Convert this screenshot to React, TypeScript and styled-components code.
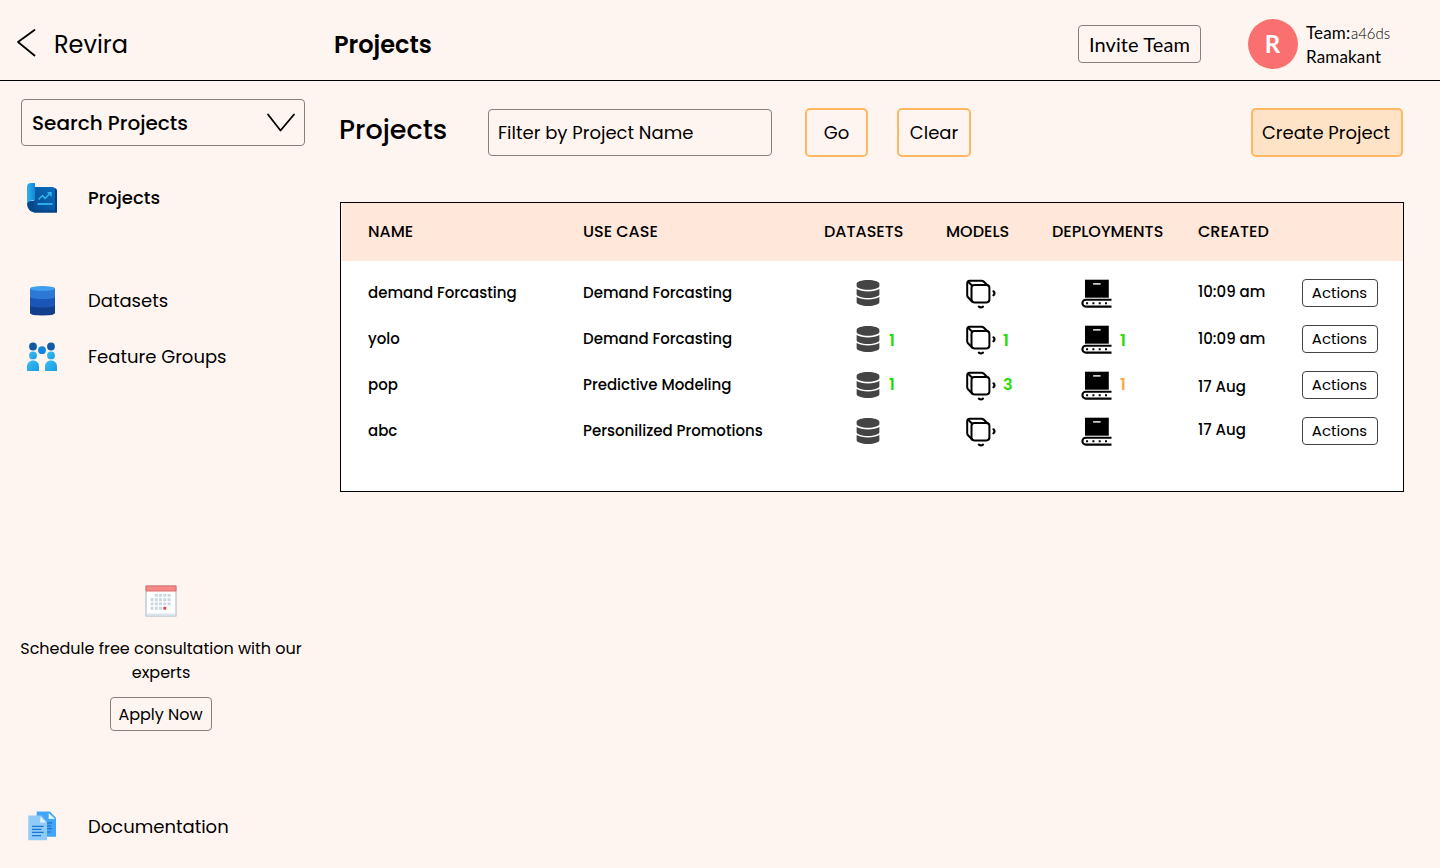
import React from "react";
import styled, { createGlobalStyle, css } from "styled-components";
import { FaDatabase } from "react-icons/fa";

const GlobalStyle = createGlobalStyle`
  *, *::before, *::after { box-sizing: border-box; }
  body {
    margin: 0;
    background: #fff5f0;
    color: #000;
    font-family: Poppins, Inter, sans-serif;
    font-feature-settings: "cv11";
  }
  button, input { font: inherit; color: inherit; background: none; margin: 0; padding: 0; }
  svg { display: block; flex: none; }
`;

const Page = styled.div`
  width: 1440px;
  height: 868px;
  overflow: hidden;
  display: flex;
  flex-direction: column;
`;

/* Top bar */

const Header = styled.header`
  flex: none;
  height: 81px;
  padding: 8px 0 0 16px;
  border-bottom: 1px solid #000;
  display: flex;
  align-items: center;
`;

const BackArrow = styled.svg`
  margin-top: -3px;
`;

const Brand = styled.div`
  width: 280px;
  margin-left: 17px;
  font-size: 24px;
`;

const HeaderTitle = styled.h1`
  margin: 0;
  font-size: 24px;
  font-weight: 600;
  flex: 1;
`;

const InviteButton = styled.button`
  width: 123px;
  height: 38px;
  border: 1px solid #858181;
  border-radius: 4px;
  font-family: Lato, sans-serif;
  font-size: 20px;
  letter-spacing: 0.1px;
`;

const Account = styled.div`
  display: flex;
  align-items: center;
  width: 192px;
  margin-left: 47px;
  font-family: Lato, sans-serif;
`;

const Avatar = styled.div`
  width: 50px;
  height: 50px;
  padding: 0 1px 1px 0;
  border-radius: 50%;
  background: #fa7070;
  color: #fff;
  font-size: 24px;
  font-weight: 700;
  display: flex;
  align-items: center;
  justify-content: center;
`;

const AccountText = styled.div`
  margin: 2px 0 0 8px;
  font-size: 17px;
  line-height: 24px;
  letter-spacing: 0.15px;
  white-space: nowrap;
`;

const TeamId = styled.span`
  font-size: 15px;
  font-weight: 300;
  letter-spacing: 0;
  margin-left: 0.5px;
`;

/* Sidebar */

const Body = styled.div`
  flex: 1;
  display: flex;
`;

const Sidebar = styled.aside`
  width: 338px;
  padding: 18px 0 25px;
  display: flex;
  flex-direction: column;
`;

const SearchSelect = styled.button`
  width: 284px;
  height: 47px;
  margin: 0 0 36px 21px;
  padding: 0 8px 0 10px;
  border: 1.5px solid #858181;
  border-radius: 4px;
  display: flex;
  align-items: center;
  justify-content: space-between;
  font-size: 20px;
  font-weight: 500;
`;

const Nav = styled.nav`
  display: flex;
  flex-direction: column;
  gap: 24px;
`;

const NavItem = styled.a<{ $active?: boolean }>`
  display: flex;
  align-items: center;
  gap: 30px;
  height: 32px;
  padding-left: 26px;
  font-size: 18px;
  line-height: 32px;
  font-weight: ${(p) => (p.$active ? 500 : 400)};
  margin-bottom: ${(p) => (p.$active ? 47 : 0)}px;
`;

const Consultation = styled.section`
  width: 322px;
  margin-top: 212px;
  display: flex;
  flex-direction: column;
  align-items: center;
`;

const ConsultationText = styled.p`
  width: 300px;
  margin: 20px 0 12px;
  font-size: 16px;
  line-height: 24px;
  text-align: center;
`;

const ApplyButton = styled.button`
  width: 102px;
  height: 34px;
  padding-right: 1px;
  border: 1px solid #858181;
  border-radius: 4px;
  font-size: 16px;
`;

const SidebarFooter = styled.div`
  margin-top: auto;
`;

/* Main area */

const Main = styled.main`
  flex: 1;
  padding-top: 27px;
`;

const Toolbar = styled.div`
  display: flex;
  align-items: center;
  height: 49px;
  margin-bottom: 45px;
`;

const Title = styled.h2`
  width: 150px;
  margin: 0 0 6px;
  padding-left: 1px;
  font-size: 27px;
  font-weight: 500;
`;

const FilterInput = styled.input`
  width: 284px;
  height: 47px;
  padding: 0 9px;
  border: 1.5px solid #858181;
  border-radius: 4px;
  font-size: 18px;
  &::placeholder { color: #000; opacity: 1; }
`;

const ToolButton = styled.button<{ $width: number; $gap?: number; $filled?: boolean }>`
  width: ${(p) => p.$width}px;
  height: 49px;
  padding-right: ${(p) => (p.$filled ? 2 : 0)}px;
  margin-left: ${(p) => (p.$gap === undefined ? "auto" : `${p.$gap}px`)};
  border: 2px solid #ffb762;
  border-radius: 5px;
  background: ${(p) => (p.$filled ? "#ffe3c6" : "transparent")};
  font-size: 18px;
`;

const Spacer = styled.div`
  width: 37px;
`;

const Table = styled.div`
  width: 1064px;
  height: 290px;
  margin-left: 2px;
  border: 1px solid #000;
  background: #fff;
`;

const columns = css`
  display: grid;
  grid-template-columns: 215px 241px 122px 106px 146px 104px 76px;
  align-items: center;
  white-space: nowrap;
  font-weight: 500;
`;

const TableHead = styled.div`
  ${columns}
  height: 58px;
  margin: 0 0 9px 1px;
  padding: 0 0 2px 26px;
  background: #ffe7da;
  font-size: 16px;
`;

const TableRow = styled.div`
  ${columns}
  height: 46px;
  padding-left: 27px;
  font-size: 15px;
`;

const Cell = styled.span<{ $shift?: number }>`
  margin-top: ${(p) => (p.$shift ?? 0) * 2}px;
`;

const IconCell = styled.div<{ $indent: number }>`
  display: flex;
  align-items: center;
  padding-left: ${(p) => p.$indent}px;
`;

const Count = styled.span<{ $color: string; $left: number; $shift?: number }>`
  margin-left: ${(p) => p.$left}px;
  margin-top: ${(p) => (p.$shift ?? 0) * 2}px;
  color: ${(p) => p.$color};
  font-size: 16px;
  font-weight: 600;
`;

const ActionsButton = styled.button`
  width: 76px;
  height: 28px;
  padding: 0 1px 1px 0;
  border: 1px solid #444;
  border-radius: 4px;
  font-size: 15px;
  font-weight: 400;
  line-height: 24px;
`;

/* Icons */

const BackIcon = () => (
  <BackArrow width="21" height="32" viewBox="0 0 21 32" fill="none" stroke="#000" strokeWidth="1.8">
    <path d="M18.500 3 2 15 18.500 28.500" strokeLinecap="round" strokeLinejoin="round" />
  </BackArrow>
);

const ChevronIcon = () => (
  <svg width="30" height="20" viewBox="0 0 30 20" fill="none" stroke="#000" strokeWidth="1.8">
    <path d="M2 1.500 14.500 17.500 28 1.500" strokeLinecap="round" strokeLinejoin="round" />
  </svg>
);

const ProjectsIcon = () => (
  <svg width="32" height="32" viewBox="0 0 32 32">
    <defs>
      <linearGradient id="roll" x1="0" x2="1">
        <stop offset="0" stopColor="#2fb1ed" />
        <stop offset="1" stopColor="#1089d8" />
      </linearGradient>
      <linearGradient id="sheet" x1="1" x2="0" y2="1">
        <stop offset="0" stopColor="#0a6cbc" />
        <stop offset="1" stopColor="#054c92" />
      </linearGradient>
    </defs>
    <path d="M8 6h20q3 0 3 3v21.500H8z" fill="#063f7c" />
    <path d="M8 5h18.500q2.500 0 2.500 2.500V28.300H8z" fill="url(#sheet)" />
    <path d="M1 21.500C1 26.500 4.500 30.500 9 30.500h22l-2-2.200H11c-3-1.500-4-5-2-9.300H4.500Q1 19 1 21.500z" fill="#06488b" />
    <path d="M5 1h4v17.500H6q-4 0-5 3.500V5q0-4 4-4z" fill="url(#roll)" />
    <g fill="none" stroke="#36b6ec" strokeWidth="1.400">
      <path d="m12.500 17.500 4-4 2.500 3 5.500-5.500M21.500 10.800H25v3.400" />
      <path d="M11.500 22h15" strokeWidth="1.800" />
    </g>
  </svg>
);

const DatasetsIcon = () => (
  <svg width="32" height="32" viewBox="0 0 32 32">
    <path d="M4 20h25V28q0 2.500-12.500 2.500T4 28z" fill="#123f8d" />
    <path d="M4 11h25v9.500q-1.500 2-12.500 2T4 20.500z" fill="#1b55b5" />
    <path d="M4 3.500h25v8.500q-1.500 2-12.500 2T4 12z" fill="#2d78d4" />
    <ellipse cx="16.500" cy="3.500" rx="12.500" ry="2.400" fill="#3f9fec" />
  </svg>
);

const GroupsIcon = () => (
  <svg width="32" height="32" viewBox="0 0 32 32">
    <defs>
      <linearGradient id="person" x1="0" x2="1" y2="1">
        <stop offset="0" stopColor="#37c1f2" />
        <stop offset="1" stopColor="#1c9ae2" />
      </linearGradient>
    </defs>
    <circle cx="7" cy="5.500" r="3.900" fill="#125ba3" />
    <circle cx="25" cy="5.500" r="3.900" fill="#125ba3" />
    <circle cx="16" cy="9.200" r="3.900" fill="#1684db" />
    <g fill="url(#person)">
      <circle cx="7" cy="14.400" r="3.900" />
      <circle cx="25" cy="14.400" r="3.900" />
      <path d="M1 30v-4.500c0-3.500 2.500-6 6-6s6 2.500 6 6V30z" />
      <path d="M19 30v-4.500c0-3.500 2.500-6 6-6s6 2.500 6 6V30z" />
    </g>
  </svg>
);

const CalendarIcon = () => (
  <svg width="32" height="32" viewBox="0 0 32 32">
    <rect x="1" y="1" width="30" height="30" fill="#fff" stroke="#9fb4c4" />
    <path d="M1.500 28.500h29v2h-29z" fill="#dbe5ec" />
    <path d="M1 1h30v5H1z" fill="#f78a87" stroke="#dd6c6c" />
    <g stroke="#c7d6e0" strokeWidth="2.900" strokeDasharray="2.900 1.350">
      <path d="M9.850 10.400H26M5.600 14.700H26M5.600 18.900H26M5.600 23.200h12" />
    </g>
    <path d="M18.350 21.800h2.900v2.900h-2.900z" fill="#e0484d" />
  </svg>
);

const DocsIcon = () => (
  <svg width="32" height="32" viewBox="0 1 32 32">
    <path d="M10.700 1.500h13.300L30 8v18.800H10.700z" fill="#42a5f5" />
    <path d="M22.700 3v6H29z" fill="#e1f5fe" />
    <path d="M20 12.900h6.300M20 15.900h5M20 18.700h6.300M20 22h5" stroke="#1976d2" strokeWidth="1.200" />
    <path d="M2.300 5.500h13L21 12v18.200H2.300z" fill="#90caf9" />
    <path d="M14.300 6.600v5.800h5.700z" fill="#e1f5fe" />
    <path d="M6 16.400h11.600M6 19.400h9.500M6 22.300h11.600M6 25.600h9" stroke="#1976d2" strokeWidth="1.200" />
  </svg>
);

const ModelIcon = () => (
  <svg width="32" height="32" viewBox="0.4 0 32 32" fill="none" stroke="#000" strokeWidth="2" strokeLinejoin="round" strokeLinecap="round">
    <rect x="6.900" y="8" width="17.900" height="17.400" rx="2.800" />
    <path d="M7.500 24.500 3.400 20.200Q2.600 19.400 2.600 18V6.200Q2.600 3.700 5 3.700h11.800q1.500 0 2.500 1L22.800 8.300M3.300 4.500l4.300 4.300" />
    <path d="M28.900 14.300q2 2 0 4M14.300 29.600q2 1.500 4 0" strokeWidth="2.200" />
  </svg>
);

const DeployIcon = () => (
  <svg width="32" height="32" viewBox="0.4 0 32 32">
    <path d="M4.400 2.700h23.800v18H4.400z" />
    <path d="M12.500 6.900H20" stroke="#fff" strokeWidth="1.400" />
    <path d="M30.900 22.800H5.200a3.400 3.400 0 0 0 0 6.800h25.700" fill="none" stroke="#000" strokeWidth="2.100" />
    <path d="M5.500 26.200h2m4.300 0h2m4.300 0h2m4.300 0h2" stroke="#000" strokeWidth="2" />
  </svg>
);

/* Data */

const GREEN = "#22dd00";
const ORANGE = "#ffa64d";

interface Project {
  name: string;
  useCase: string;
  created: string;
  createdShift: number;
  counts?: { datasets: number; models: number; deployments: number; deployColor: string; shift: number };
}

const projects: Project[] = [
  { name: "demand Forcasting", useCase: "Demand Forcasting", created: "10:09 am", createdShift: -2 },
  {
    name: "yolo",
    useCase: "Demand Forcasting",
    created: "10:09 am",
    createdShift: -1,
    counts: { datasets: 1, models: 1, deployments: 1, deployColor: GREEN, shift: 1 },
  },
  {
    name: "pop",
    useCase: "Predictive Modeling",
    created: "17 Aug",
    createdShift: 1,
    counts: { datasets: 1, models: 3, deployments: 1, deployColor: ORANGE, shift: -1 },
  },
  { name: "abc", useCase: "Personilized Promotions", created: "17 Aug", createdShift: -2 },
];

export default function App() {
  return (
    <Page>
      <GlobalStyle />
      <Header>
        <BackIcon />
        <Brand>Revira</Brand>
        <HeaderTitle>Projects</HeaderTitle>
        <InviteButton>Invite Team</InviteButton>
        <Account>
          <Avatar>R</Avatar>
          <AccountText>
            Team:<TeamId>a46ds</TeamId>
            <br />
            Ramakant
          </AccountText>
        </Account>
      </Header>
      <Body>
        <Sidebar>
          <SearchSelect>
            Search Projects
            <ChevronIcon />
          </SearchSelect>
          <Nav>
            <NavItem $active><ProjectsIcon />Projects</NavItem>
            <NavItem><DatasetsIcon />Datasets</NavItem>
            <NavItem><GroupsIcon />Feature Groups</NavItem>
          </Nav>
          <Consultation>
            <CalendarIcon />
            <ConsultationText>Schedule free consultation with our experts</ConsultationText>
            <ApplyButton>Apply Now</ApplyButton>
          </Consultation>
          <SidebarFooter>
            <NavItem><DocsIcon />Documentation</NavItem>
          </SidebarFooter>
        </Sidebar>
        <Main>
          <Toolbar>
            <Title>Projects</Title>
            <FilterInput placeholder="Filter by Project Name" />
            <ToolButton $width={63} $gap={33}>Go</ToolButton>
            <ToolButton $width={74} $gap={29}>Clear</ToolButton>
            <ToolButton $width={152} $filled>Create Project</ToolButton>
            <Spacer />
          </Toolbar>
          <Table>
            <TableHead>
              <Cell>NAME</Cell>
              <Cell>USE CASE</Cell>
              <Cell>DATASETS</Cell>
              <Cell>MODELS</Cell>
              <Cell>DEPLOYMENTS</Cell>
              <Cell>CREATED</Cell>
            </TableHead>
            {projects.map(({ name, useCase, created, createdShift, counts }) => (
              <TableRow key={name}>
                <Cell $shift={-1}>{name}</Cell>
                <Cell $shift={-1}>{useCase}</Cell>
                <IconCell $indent={31.4}>
                  <FaDatabase size={26} color="#444" />
                  {counts && <Count $color={GREEN} $left={7.6} $shift={counts.shift}>{counts.datasets}</Count>}
                </IconCell>
                <IconCell $indent={19}>
                  <ModelIcon />
                  {counts && <Count $color={GREEN} $left={6} $shift={counts.shift}>{counts.models}</Count>}
                </IconCell>
                <IconCell $indent={29}>
                  <DeployIcon />
                  {counts && <Count $color={counts.deployColor} $left={7} $shift={counts.shift}>{counts.deployments}</Count>}
                </IconCell>
                <Cell $shift={createdShift}>{created}</Cell>
                <ActionsButton>Actions</ActionsButton>
              </TableRow>
            ))}
          </Table>
        </Main>
      </Body>
    </Page>
  );
}
